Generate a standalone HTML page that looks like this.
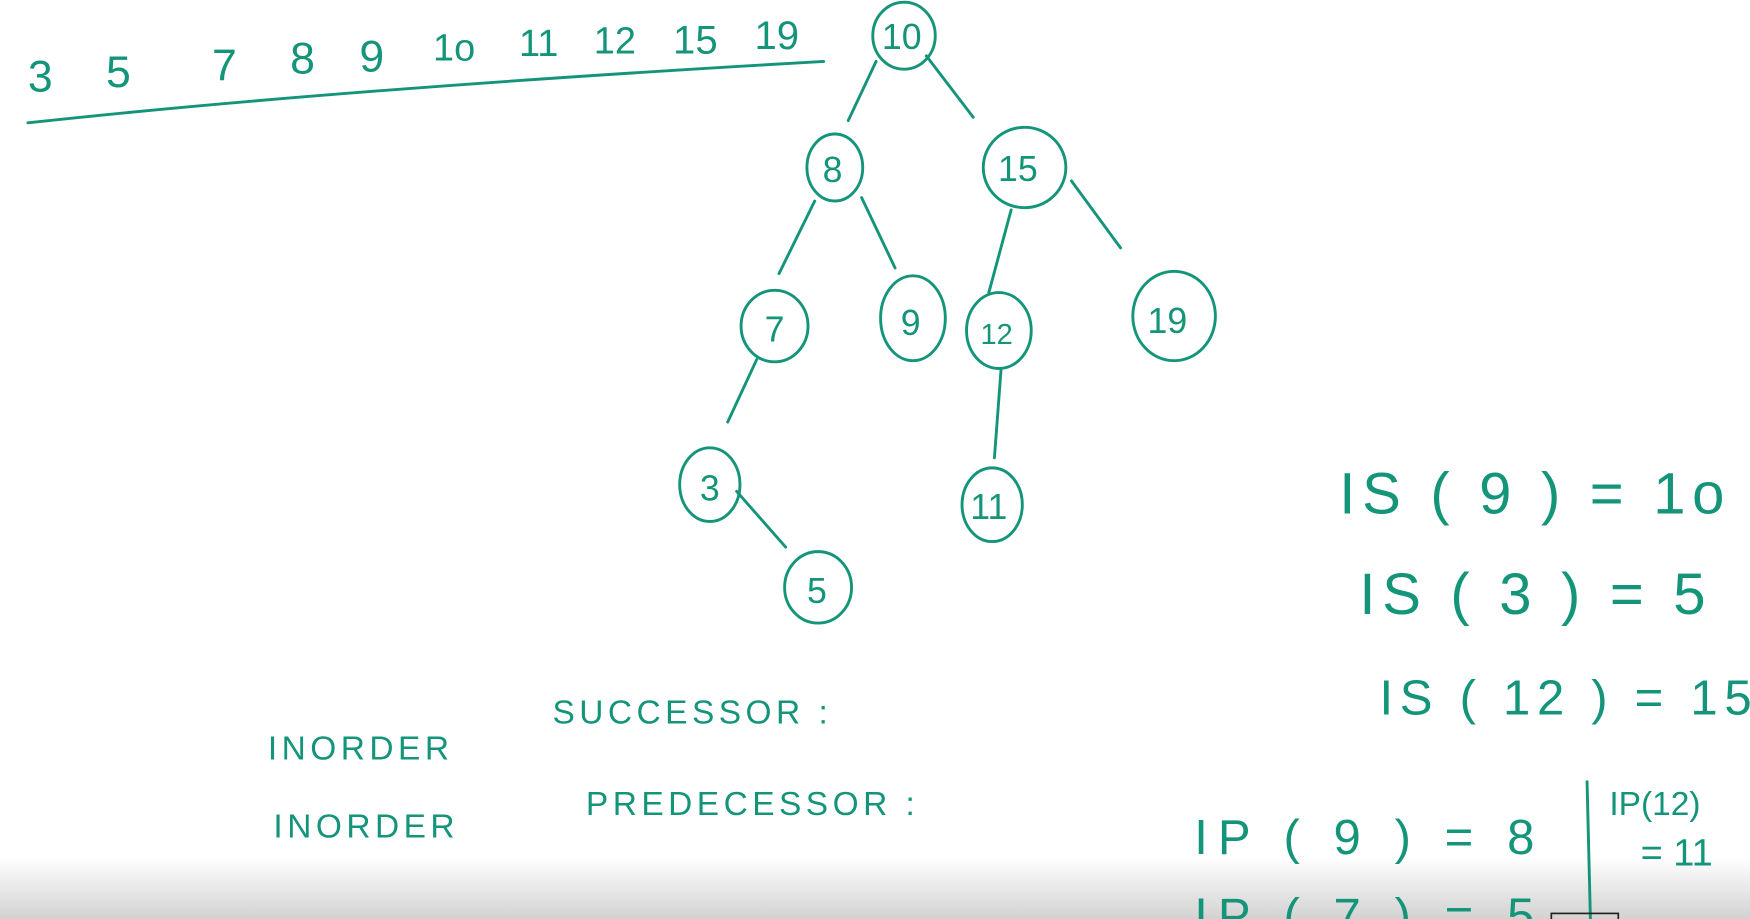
<!DOCTYPE html>
<html><head><meta charset="utf-8"><style>
html,body{margin:0;padding:0;background:#fff;width:1750px;height:919px;overflow:hidden}
svg{display:block}
text{font-family:"Liberation Sans",sans-serif;fill:#14957a}
</style></head><body>
<svg width="1750" height="919" viewBox="0 0 1568 823" preserveAspectRatio="none">
<defs><linearGradient id="g" x1="0" y1="0" x2="0" y2="1"><stop offset="0" stop-color="#fff"/><stop offset="1" stop-color="#d2d2d2"/></linearGradient></defs>
<rect width="1568" height="823" fill="#fff"/>
<rect y="768" width="1568" height="55" fill="url(#g)"/>
<g fill="none" stroke="#14957a" stroke-width="2.6" stroke-linecap="round">
<path d="M25 110 Q300 80 738 55"/>
<ellipse cx="810" cy="32" rx="28" ry="30"/>
<ellipse cx="748" cy="150" rx="25" ry="30"/>
<ellipse cx="918" cy="150" rx="37" ry="36"/>
<ellipse cx="694" cy="292" rx="30" ry="32"/>
<ellipse cx="818" cy="285" rx="29" ry="38"/>
<ellipse cx="895" cy="296" rx="29" ry="34"/>
<ellipse cx="1052" cy="283" rx="37" ry="40"/>
<ellipse cx="636" cy="434" rx="27" ry="33"/>
<ellipse cx="889" cy="452" rx="27" ry="33"/>
<ellipse cx="733" cy="526" rx="30" ry="32"/>
<path d="M785 55 L760 108 M830 50 L872 105 M730 180 L698 245 M772 177 L802 240 M906 188 L886 262 M960 162 L1004 222 M678 322 L652 378 M897 330 L891 410 M660 440 L704 490"/>
<path d="M1422 700 L1425 823"/>
<rect x="1390" y="818" width="60" height="8" stroke-width="1.5" stroke="#222"/>
</g>
<g font-size="40">
<text x="25" y="82">3</text><text x="95" y="78">5</text><text x="190" y="72">7</text><text x="260" y="66">8</text><text x="322" y="64">9</text><text x="388" y="54" font-size="34">1o</text>
<text x="465" y="50" font-size="34">11</text><text x="532" y="48" font-size="34">12</text><text x="603" y="48" font-size="36">15</text><text x="676" y="44" font-size="36">19</text>
</g>
<g font-size="32" text-anchor="middle">
<text x="808" y="44">10</text><text x="746" y="163">8</text><text x="912" y="162">15</text><text x="694" y="306">7</text><text x="816" y="300">9</text>
<text x="893" y="308" font-size="26">12</text><text x="1046" y="298">19</text><text x="636" y="448">3</text><text x="886" y="465">11</text><text x="732" y="540">5</text>
</g>
<g font-size="30" letter-spacing="4">
<text x="240" y="680">INORDER</text><text x="495" y="648">SUCCESSOR :</text>
<text x="245" y="750">INORDER</text><text x="525" y="730">PREDECESSOR :</text>
</g>
<g font-size="52">
<text x="1200" y="460" letter-spacing="6">IS ( 9 ) = 1o</text>
<text x="1218" y="550" letter-spacing="6">IS ( 3 ) =  5</text>
<text x="1236" y="640" font-size="44" letter-spacing="6">IS ( 12 ) =  15</text>
<text x="1070" y="765" font-size="44" letter-spacing="9">IP ( 9 )  =   8</text>
<text x="1070" y="835" font-size="44" letter-spacing="9">IP ( 7 )  =   5</text>
<text x="1442" y="730" font-size="30">IP(12)</text>
<text x="1470" y="775" font-size="34">= 11</text>
</g>
</svg>
</body></html>
